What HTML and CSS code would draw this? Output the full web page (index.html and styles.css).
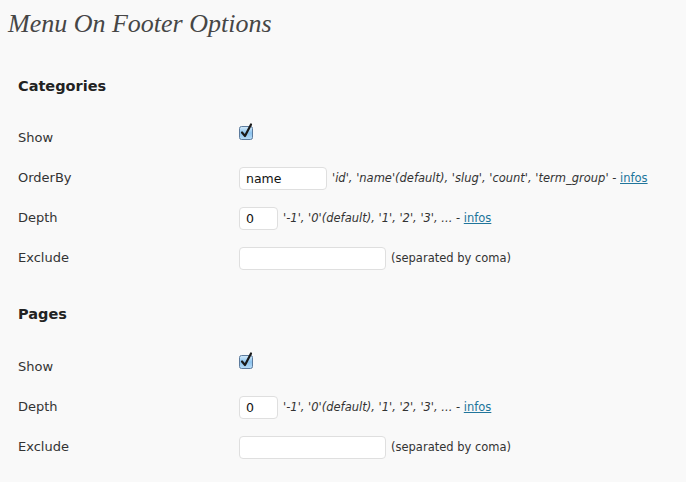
FILE: index.html
```html
<!DOCTYPE html>
<html>
<head>
<meta charset="utf-8">
<link rel="stylesheet" href="styles.css">
</head>
<body>
<div class="wrap">
  <h1 class="title">Menu On Footer Options</h1>

  <h3 class="section">Categories</h3>
  <div class="row">
    <div class="label">Show</div>
    <div class="field"><span class="check"><svg width="16" height="17" viewBox="0 0 16 17"><defs><linearGradient id="g1" x1="0" y1="0" x2="0" y2="1"><stop offset="0" stop-color="#d6ecfb"/><stop offset="0.5" stop-color="#8cc3ee"/><stop offset="1" stop-color="#b9dcf7"/></linearGradient></defs><rect x="0.5" y="3.5" width="13" height="13" rx="2" fill="url(#g1)" stroke="#5d7b9d"/><path d="M3 9.5 L6 13 L12 1.5" fill="none" stroke="#1a1a1a" stroke-width="2.2" stroke-linecap="round" stroke-linejoin="round"/></svg></span></div>
  </div>
  <div class="row">
    <div class="label">OrderBy</div>
    <div class="field"><span class="input w-name">name</span><span class="hint"><i>'id', 'name'(default), 'slug', 'count', 'term_group'</i> - <a href="#">infos</a></span></div>
  </div>
  <div class="row">
    <div class="label">Depth</div>
    <div class="field"><span class="input w-depth">0</span><span class="hint"><i>'-1', '0'(default), '1', '2', '3', ...</i> - <a href="#">infos</a></span></div>
  </div>
  <div class="row">
    <div class="label">Exclude</div>
    <div class="field"><span class="input w-excl"></span><span class="hint">(separated by coma)</span></div>
  </div>

  <h3 class="section second">Pages</h3>
  <div class="row">
    <div class="label">Show</div>
    <div class="field"><span class="check"><svg width="16" height="17" viewBox="0 0 16 17"><defs><linearGradient id="g2" x1="0" y1="0" x2="0" y2="1"><stop offset="0" stop-color="#d6ecfb"/><stop offset="0.5" stop-color="#8cc3ee"/><stop offset="1" stop-color="#b9dcf7"/></linearGradient></defs><rect x="0.5" y="3.5" width="13" height="13" rx="2" fill="url(#g2)" stroke="#5d7b9d"/><path d="M3 9.5 L6 13 L12 1.5" fill="none" stroke="#1a1a1a" stroke-width="2.2" stroke-linecap="round" stroke-linejoin="round"/></svg></span></div>
  </div>
  <div class="row">
    <div class="label">Depth</div>
    <div class="field"><span class="input w-depth">0</span><span class="hint"><i>'-1', '0'(default), '1', '2', '3', ...</i> - <a href="#">infos</a></span></div>
  </div>
  <div class="row">
    <div class="label">Exclude</div>
    <div class="field"><span class="input w-excl"></span><span class="hint">(separated by coma)</span></div>
  </div>
</div>
</body>
</html>
```

FILE: styles.css
```css
html, body {
  margin: 0;
  padding: 0;
  background: #f9f9f9;
}
body {
  font-family: "DejaVu Sans", Verdana, sans-serif;
  color: #333;
}
.wrap {
  padding: 9px 0 0 8px;
}
.title {
  margin: 0;
  font-family: "Liberation Serif", Georgia, serif;
  font-style: italic;
  font-weight: normal;
  font-size: 26px;
  line-height: 29px;
  color: #464646;
}
.section {
  margin: 38px 0 0 10px;
  font-size: 14.5px;
  line-height: 20px;
  font-weight: bold;
  color: #222;
}
.section.second {
  margin-top: 26px;
}
.row {
  display: flex;
  align-items: center;
  height: 40px;
}
.section + .row {
  margin-top: 22px;
}
.section.second + .row {
  margin-top: 23px;
}
.label {
  width: 221px;
  padding-left: 10px;
  font-size: 13px;
  line-height: 16px;
  color: #333;
}
.field {
  display: flex;
  align-items: center;
}
.check {
  display: block;
  height: 17px;
  margin-top: -14px;
}
.check svg {
  display: block;
}
.input {
  box-sizing: border-box;
  display: block;
  height: 23px;
  background: #fff;
  border: 1px solid #dfdfdf;
  border-radius: 4px;
  padding: 0 6px;
  font-size: 12.5px;
  line-height: 21px;
  color: #111;
}
.w-name { width: 88px; }
.w-depth { width: 39px; }
.w-excl { width: 147px; }
.hint {
  margin-left: 5px;
  font-size: 11.5px;
  color: #333;
}
.hint a {
  color: #21759b;
}
```
